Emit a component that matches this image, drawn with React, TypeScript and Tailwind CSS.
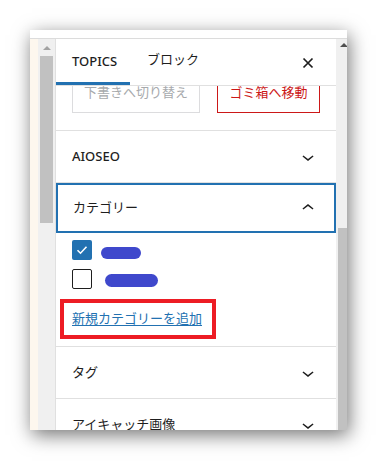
import React from "react";

const FONT = {
  fontFamily: '"Noto Sans", "Noto Sans CJK JP", sans-serif',
};

const ChevronDown = () => (
  <svg width="24" height="24" viewBox="0 0 24 24" fill="#1e1e1e">
    <path d="M17.5 11.6L12 16l-5.5-4.4.9-1.2L12 14l4.6-3.6 1 1.2z" />
  </svg>
);

const ChevronUp = () => (
  <svg width="24" height="24" viewBox="0 0 24 24" fill="#1e1e1e">
    <path d="M6.5 12.4L12 8l5.5 4.4-.9 1.2L12 10l-4.6 3.6-1-1.2z" />
  </svg>
);

const CloseIcon = () => (
  <svg width="24" height="24" viewBox="0 0 24 24" stroke="#1e1e1e" strokeWidth="1.7" fill="none">
    <path d="M7.5 7.5l9 9M16.5 7.5l-9 9" />
  </svg>
);

const PanelRow = ({ title, open = false, focused = false, medium = false }) => (
  <div
    className={`flex items-center justify-between pl-4 pr-4 shrink-0 ${
      focused ? "h-[50px] border-2 border-[#2271b1]" : "h-[52px] border-b border-[#e0e0e0]"
    }`}
  >
    <span className={`text-[13px] text-[#1e1e1e] ${medium ? "font-medium" : ""} ${focused ? "-ml-px" : ""}`}>
      {title}
    </span>
    <span className={focused ? "-mr-0.5" : ""}>{open ? <ChevronUp /> : <ChevronDown />}</span>
  </div>
);

const App = () => {
  return (
    <div className="w-[377px] h-[461px] bg-white pt-[30px] pl-[30px]" style={FONT}>
      <div className="flex flex-col w-[317px] h-[400px] bg-white overflow-hidden shadow-[2px_5px_18px_rgba(0,0,0,0.55)]">
        <div className="h-[9px] shrink-0 bg-white border-b border-[#dcdcdc]" />
        <div className="flex flex-1 min-h-0">
          {/* left strip + scrollbar */}
          <div className="w-[8px] bg-[#fdf7ee]" />
          <div className="w-[17px] bg-[#f0f0f0] flex flex-col items-center">
            <div className="h-[17px] flex items-center justify-center">
              <div className="w-0 h-0 border-x-[4px] border-x-transparent border-b-[4px] border-b-[#a3a3a3]" />
            </div>
            <div className="w-[13px] h-[167px] bg-[#c1c1c1]" />
          </div>

          {/* sidebar panel */}
          <div className="flex-1 flex flex-col border-l border-[#e0e0e0] overflow-hidden">
            {/* tabs */}
            <div className="flex items-center h-[47px] shrink-0 border-b border-[#e0e0e0]">
              <div className="h-[46px] w-[74px] flex items-center pl-4 text-[13px] font-medium text-[#1e1e1e] shadow-[inset_0_-3px_0_#2271b1]">
                TOPICS
              </div>
              <div className="h-[46px] flex items-center pl-[17px] pb-1 text-[13px] text-[#1e1e1e]">
                ブロック
              </div>
              <div className="ml-auto mr-4 pt-0.5">
                <CloseIcon />
              </div>
            </div>

            {/* scrolled content */}
            <div className="flex items-end gap-[17px] px-4 pb-[17px] h-[45px] shrink-0 overflow-hidden border-b border-[#e0e0e0]">
              <div className="h-10 w-[128px] shrink-0 border border-[#dcdcde] flex items-center justify-center text-[13px] text-[#a7aaad]">
                下書きへ切り替え
              </div>
              <div className="h-10 w-[103px] shrink-0 border border-[#cc1818] flex items-center justify-center text-[13px] text-[#cc1818]">
                ゴミ箱へ移動
              </div>
            </div>

            <PanelRow title="AIOSEO" medium />
            <PanelRow title="カテゴリー" open focused />

            <div className="flex flex-col pl-4 pt-[7px] pb-[7px] border-b border-[#e0e0e0] shrink-0">
              <div className="flex items-center h-5">
                <div className="w-5 h-5 rounded-[2px] bg-[#2271b1] flex items-center justify-center">
                  <svg width="14" height="14" viewBox="0 0 14 14" fill="none" stroke="white" strokeWidth="1.6">
                    <path d="M2.5 7.2l3 3 6-6.5" />
                  </svg>
                </div>
                <div className="ml-[9px] mt-[6px] w-[40px] h-[12px] rounded-full bg-[#3f48cc]" />
              </div>
              <div className="flex items-center h-5 mt-[9px]">
                <div className="w-5 h-5 rounded-[2px] border border-[#1e1e1e] bg-white" />
                <div className="ml-[13px] mt-[2px] w-[53px] h-[13px] rounded-full bg-[#3f48cc]" />
              </div>
              <div className="mt-[10px] -ml-3 w-[156px] h-[40px] border-4 border-[#ed1c24] flex items-center pl-2">
                <a href="#" className="text-[13px] text-[#2271b1] underline underline-offset-2">
                  新規カテゴリーを追加
                </a>
              </div>
            </div>

            <PanelRow title="タグ" />
            <PanelRow title="アイキャッチ画像" />
          </div>

          {/* right scrollbar */}
          <div className="w-[11px] bg-[#f0f0f0] flex flex-col">
            <div className="h-[12px] flex items-center pl-[4px]">
              <div className="w-0 h-0 border-x-[4px] border-x-transparent border-b-[4px] border-b-[#505050]" />
            </div>
            <div className="h-[177px]" />
            <div className="flex-1 ml-[2px] bg-[#c1c1c1]" />
          </div>
        </div>
      </div>
    </div>
  );
};

export default App;
